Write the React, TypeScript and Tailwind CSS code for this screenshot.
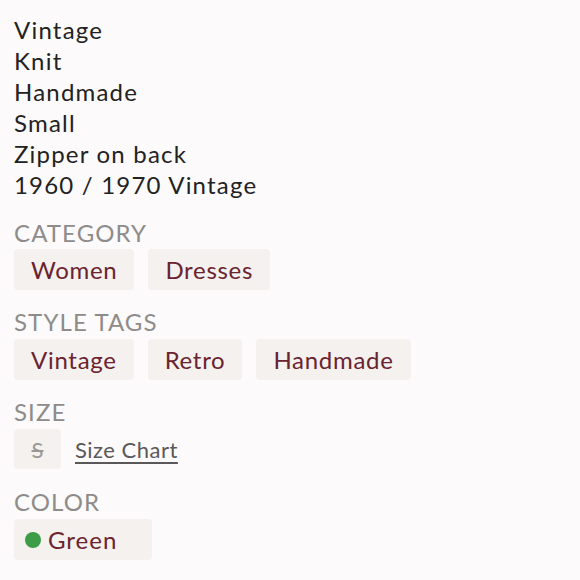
const lines = ["Vintage", "Knit", "Handmade", "Small", "Zipper on back", "1960 / 1970 Vintage"];

function Chip({ children }: { children: React.ReactNode }) {
  return (
    <span className="flex h-[41px] items-center rounded-[4px] bg-[#f4f1ee] px-[17px] tracking-[0.7px] text-[#6b2330]">
      {children}
    </span>
  );
}

function Heading({ children }: { children: React.ReactNode }) {
  return <div className="h-[31px] leading-[31px] tracking-[1.1px] text-[#8e8c8a]">{children}</div>;
}

export default function App() {
  return (
    <div className="min-h-[580px] w-[580px] bg-[#fcfafa] px-[14px] pt-[14px] text-[24px] font-['Lato',sans-serif] text-[#222]">
      <div className="leading-[31px] tracking-[1.2px]">
        {lines.map((l) => (
          <div key={l}>{l}</div>
        ))}
      </div>

      <div className="mt-[17px]">
        <Heading>CATEGORY</Heading>
        <div className="mt-[1px] flex gap-[14px]">
          <Chip>Women</Chip>
          <Chip>Dresses</Chip>
        </div>
      </div>

      <div className="mt-[16px]">
        <Heading>STYLE TAGS</Heading>
        <div className="mt-[2px] flex gap-[14px]">
          <Chip>Vintage</Chip>
          <Chip>Retro</Chip>
          <Chip>Handmade</Chip>
        </div>
      </div>

      <div className="mt-[16px]">
        <Heading>SIZE</Heading>
        <div className="mt-[2px] flex items-center gap-[14px]">
          <span className="flex h-[40px] w-[47px] items-center justify-center rounded-[4px] bg-[#f4f1ee] text-[22px] text-[#9a9896] line-through">
            S
          </span>
          <a className="text-[22px] tracking-[0.5px] text-[#5a5858] underline underline-offset-4">Size Chart</a>
        </div>
      </div>

      <div className="mt-[17px]">
        <Heading>COLOR</Heading>
        <div className="mt-[2px] flex">
          <span className="flex h-[41px] w-[138px] items-center gap-[7px] rounded-[4px] bg-[#f4f1ee] pl-[11px] tracking-[1px] text-[#6b2330]">
            <span className="h-[16px] w-[16px] rounded-full bg-[#3c9c48]" />
            Green
          </span>
        </div>
      </div>
    </div>
  );
}
